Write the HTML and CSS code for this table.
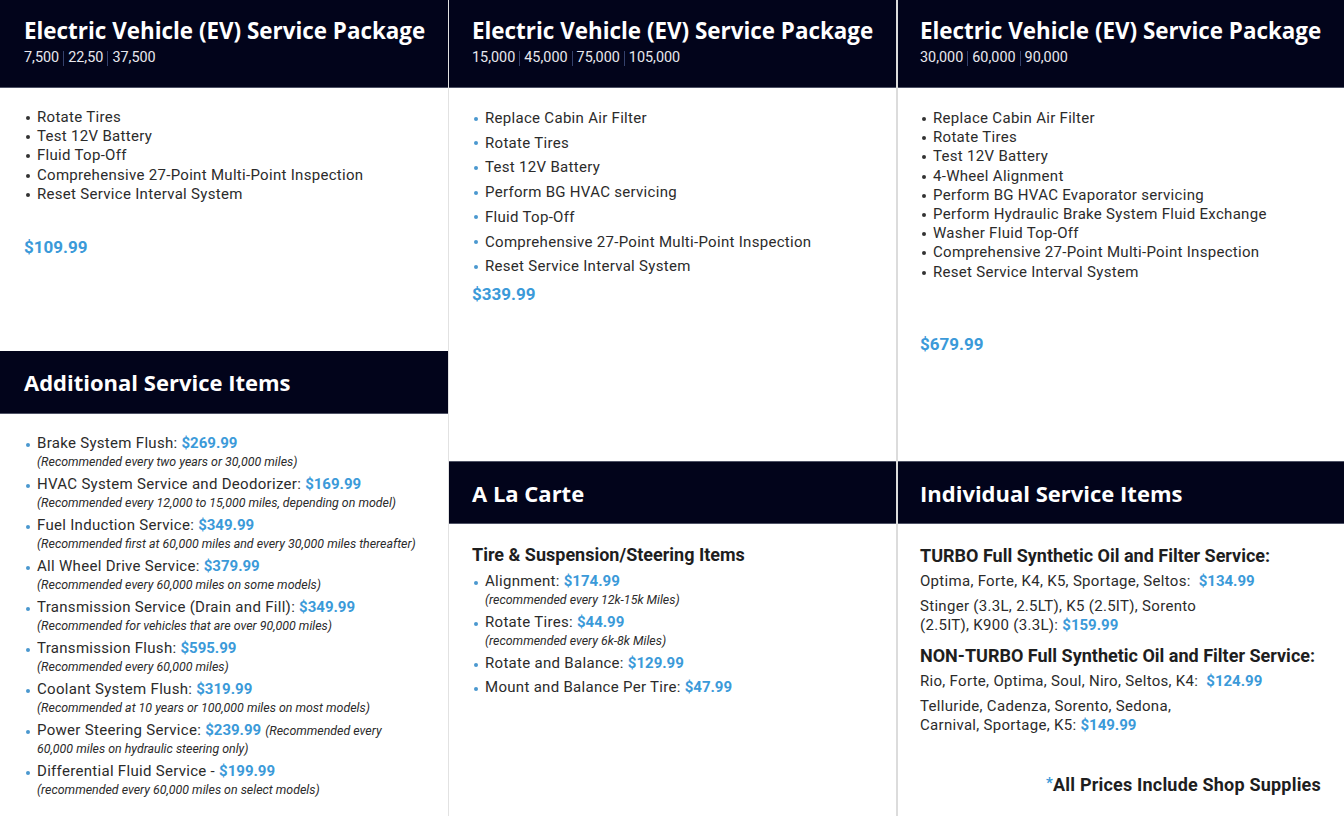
FILE: index.html
```html
<!DOCTYPE html>
<html lang="en">
<head>
<meta charset="utf-8">
<title>EV Service Packages</title>
<link rel="stylesheet" href="styles.css">
</head>
<body>
<div class="page">
  <div class="col col-1">
    <section class="card ev ev-short">
      <header class="head">
        <h2 class="title">Electric Vehicle (EV) Service Package</h2>
        <p class="miles">7,500<span class="sep"></span>22,50<span class="sep"></span>37,500</p>
      </header>
      <div class="body">
        <ul class="dots tight">
          <li>Rotate Tires</li>
          <li>Test 12V Battery</li>
          <li>Fluid Top-Off</li>
          <li>Comprehensive 27-Point Multi-Point Inspection</li>
          <li>Reset Service Interval System</li>
        </ul>
        <p class="price price-1">$109.99</p>
      </div>
    </section>
    <section class="card extra">
      <header class="head head-sm">
        <h2 class="title">Additional Service Items</h2>
      </header>
      <div class="body">
        <ul class="dots blue services">
          <li>Brake System Flush: <b class="p">$269.99</b><i>(Recommended every two years or 30,000 miles)</i></li>
          <li>HVAC System Service and Deodorizer: <b class="p">$169.99</b><i>(Recommended every 12,000 to 15,000 miles, depending on model)</i></li>
          <li>Fuel Induction Service: <b class="p">$349.99</b><i>(Recommended first at 60,000 miles and every 30,000 miles thereafter)</i></li>
          <li>All Wheel Drive Service: <b class="p">$379.99</b><i>(Recommended every 60,000 miles on some models)</i></li>
          <li>Transmission Service (Drain and Fill): <b class="p">$349.99</b><i>(Recommended for vehicles that are over 90,000 miles)</i></li>
          <li>Transmission Flush: <b class="p">$595.99</b><i>(Recommended every 60,000 miles)</i></li>
          <li>Coolant System Flush: <b class="p">$319.99</b><i>(Recommended at 10 years or 100,000 miles on most models)</i></li>
          <li class="ps">Power Steering Service: <b class="p">$239.99</b> <em>(Recommended every</em><i>60,000 miles on hydraulic steering only)</i></li>
          <li>Differential Fluid Service - <b class="p">$199.99</b><i>(recommended every 60,000 miles on select models)</i></li>
        </ul>
      </div>
    </section>
  </div>

  <div class="col col-2">
    <section class="card ev ev-tall">
      <header class="head">
        <h2 class="title">Electric Vehicle (EV) Service Package</h2>
        <p class="miles">15,000<span class="sep"></span>45,000<span class="sep"></span>75,000<span class="sep"></span>105,000</p>
      </header>
      <div class="body body-loose">
        <ul class="dots blue loose">
          <li>Replace Cabin Air Filter</li>
          <li>Rotate Tires</li>
          <li>Test 12V Battery</li>
          <li>Perform BG HVAC servicing</li>
          <li>Fluid Top-Off</li>
          <li>Comprehensive 27-Point Multi-Point Inspection</li>
          <li>Reset Service Interval System</li>
        </ul>
        <p class="price price-2">$339.99</p>
      </div>
    </section>
    <section class="card">
      <header class="head head-sm">
        <h2 class="title">A La Carte</h2>
      </header>
      <div class="body body-sub">
        <h3 class="sub">Tire &amp; Suspension/Steering Items</h3>
        <ul class="dots blue carte">
          <li>Alignment: <b class="p">$174.99</b><i>(recommended every 12k-15k Miles)</i></li>
          <li>Rotate Tires: <b class="p">$44.99</b><i>(recommended every 6k-8k Miles)</i></li>
          <li>Rotate and Balance: <b class="p">$129.99</b></li>
          <li>Mount and Balance Per Tire: <b class="p">$47.99</b></li>
        </ul>
      </div>
    </section>
  </div>

  <div class="col col-3">
    <section class="card ev ev-tall">
      <header class="head">
        <h2 class="title">Electric Vehicle (EV) Service Package</h2>
        <p class="miles">30,000<span class="sep"></span>60,000<span class="sep"></span>90,000</p>
      </header>
      <div class="body">
        <ul class="dots tight">
          <li>Replace Cabin Air Filter</li>
          <li>Rotate Tires</li>
          <li>Test 12V Battery</li>
          <li>4-Wheel Alignment</li>
          <li>Perform BG HVAC Evaporator servicing</li>
          <li>Perform Hydraulic Brake System Fluid Exchange</li>
          <li>Washer Fluid Top-Off</li>
          <li>Comprehensive 27-Point Multi-Point Inspection</li>
          <li>Reset Service Interval System</li>
        </ul>
        <p class="price price-3">$679.99</p>
      </div>
    </section>
    <section class="card">
      <header class="head head-sm">
        <h2 class="title">Individual Service Items</h2>
      </header>
      <div class="body body-sub">
        <h3 class="sub">TURBO Full Synthetic Oil and Filter Service:</h3>
        <p class="line">Optima, Forte, K4, K5, Sportage, Seltos:&nbsp; <b class="p">$134.99</b></p>
        <p class="line">Stinger (3.3L, 2.5LT), K5 (2.5IT), Sorento<br>(2.5IT), K900 (3.3L): <b class="p">$159.99</b></p>
        <h3 class="sub sub-2">NON-TURBO Full Synthetic Oil and Filter Service:</h3>
        <p class="line">Rio, Forte, Optima, Soul, Niro, Seltos, K4:&nbsp; <b class="p">$124.99</b></p>
        <p class="line">Telluride, Cadenza, Sorento, Sedona,<br>Carnival, Sportage, K5: <b class="p">$149.99</b></p>
        <p class="note"><span class="star">*</span>All Prices Include Shop Supplies</p>
      </div>
    </section>
  </div>
</div>
</body>
</html>
```

FILE: styles.css
```css
* { box-sizing: border-box; }

html, body {
  margin: 0;
  padding: 0;
  background: #ffffff;
}

body {
  font-family: "Roboto", "Liberation Sans", sans-serif;
  color: #2a2a2a;
  width: 1344px;
  height: 816px;
  overflow: hidden;
}

.page {
  display: grid;
  grid-template-columns: 448px 448px 448px;
  height: 816px;
}

.col {
  display: flex;
  flex-direction: column;
}

.col-2 {
  border-left: 1px solid #e2e2e2;
}
.col-3 {
  border-left: 2px solid #dcdcdc;
}

.card {
  display: flex;
  flex-direction: column;
}

.head {
  background: #02041b;
  color: #ffffff;
  height: 88px;
  padding: 17px 24px 0;
  border-bottom: 1px solid #4f5366;
}

.col-2 .head { padding-left: 23px; padding-right: 10px; }
.col-3 .head { padding-left: 22px; padding-right: 10px; }

.head-sm {
  height: 63px;
  padding-top: 0;
  display: flex;
  align-items: center;
  border-top: 1px solid #4f5366;
}

.col-1 .head-sm { border-top: 0; }

.title {
  margin: 0;
  font-family: "Open Sans", "Liberation Sans", sans-serif;
  font-weight: 700;
  font-size: 22.4px;
  line-height: 27px;
  letter-spacing: 0;
  white-space: nowrap;
}

.head-sm .title {
  font-size: 22px;
  padding-top: 1px;
}

.miles {
  margin: 5px 0 0;
  font-size: 14.4px;
  line-height: 18px;
  color: #e8e8ee;
  font-weight: 400;
  display: flex;
  align-items: center;
}

.sep {
  display: inline-block;
  width: 1px;
  height: 15px;
  background: #34416c;
  margin: 0 4px;
}

.body {
  padding: 20px 24px 0;
  flex: 1;
}

.col-2 .body { padding-left: 23px; padding-right: 10px; }
.col-3 .body { padding-left: 22px; padding-right: 10px; }
.col-2 .body-loose { padding-top: 18px; }
.col-3 .ev .body { padding-top: 21px; }

.ev-short { height: 351px; }
.ev-tall { height: 461px; }

.dots {
  list-style: none;
  margin: 0;
  padding: 0;
  font-size: 15px;
  letter-spacing: 0.3px;
  color: #2b2b2b;
}

.dots li {
  position: relative;
  padding-left: 13px;
}

.dots li::before {
  content: "";
  position: absolute;
  left: 2px;
  top: 8px;
  width: 4px;
  height: 4px;
  border-radius: 50%;
  background: #333;
}

.dots.blue li::before {
  background: #4a98cf;
  width: 4px;
  height: 4px;
  top: 9px;
}

.tight li { line-height: 19.2px; }

.loose li { line-height: 24.7px; }
.loose li::before { top: 10.5px !important; }

.price {
  margin: 0;
  color: #3b9ad9;
  font-weight: 700;
  font-size: 17px;
  line-height: 22px;
  letter-spacing: 0;
}
.price-1 { margin-top: 32px; }
.price-2 { margin-top: 4px; }
.price-3 { margin-top: 51px; }

.p {
  color: #3b9ad9;
  font-weight: 700;
  letter-spacing: 0;
}

.services li {
  line-height: 19px;
  margin-bottom: 5px;
}
.services li::before { top: 9px; }

.services i, .carte i {
  display: block;
  font-size: 12.4px;
  line-height: 17px;
  color: #2b2b2b;
  letter-spacing: 0;
}

.services em {
  font-style: italic;
  font-size: 12.4px;
  letter-spacing: 0;
}

.body-sub {
  padding-top: 20px;
}

.sub {
  margin: 0;
  font-size: 18px;
  line-height: 22px;
  font-weight: 700;
  color: #1e1e1e;
  letter-spacing: 0;
}

.col-3 .body-sub { padding-top: 21px; }

.carte { margin-top: 6px; }
.carte li { line-height: 19px; margin-bottom: 5px; }
.carte li::before { top: 9px; }

.line {
  margin: 5px 0 0;
  font-size: 15px;
  letter-spacing: 0.3px;
  line-height: 19px;
  color: #2b2b2b;
}
.line + .line { margin-top: 6px; }

.sub-2 { margin-top: 10px; }

.note {
  margin: 37px 0 0;
  text-align: right;
  font-size: 18px;
  font-weight: 700;
  line-height: 22px;
  color: #1e1e1e;
  padding-right: 13px;
  letter-spacing: 0.2px;
}

.star {
  color: #3b9ad9;
  vertical-align: 3px;
  font-size: 15px;
}
```
